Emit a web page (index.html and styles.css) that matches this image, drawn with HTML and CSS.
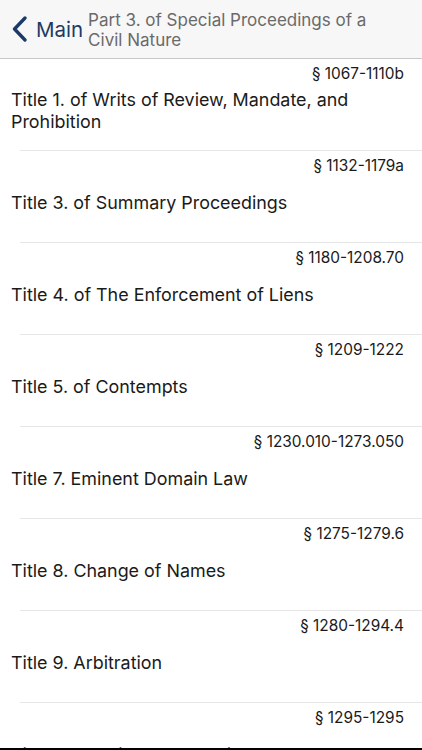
FILE: index.html
```html
<!DOCTYPE html>
<html>
<head>
<meta charset="utf-8">
<link rel="stylesheet" href="styles.css">
</head>
<body>
<header class="nav">
  <div class="back">
    <svg class="chev" width="17" height="26" viewBox="0 0 17 26"><path d="M14 2 L3.5 13 L14 24" fill="none" stroke="#1d3a66" stroke-width="3.3" stroke-linecap="round" stroke-linejoin="round"/></svg>
    <span class="back-text">Main</span>
  </div>
  <div class="nav-title">Part 3. of Special Proceedings of a Civil Nature</div>
</header>
<main class="list">
  <div class="row">
    <div class="label">§ 1067-1110b</div>
    <div class="title"><span>Title 1. of Writs of Review, Mandate, and Prohibition</span></div>
  </div>
  <div class="sep"></div>
  <div class="row">
    <div class="label">§ 1132-1179a</div>
    <div class="title"><span>Title 3. of Summary Proceedings</span></div>
  </div>
  <div class="sep"></div>
  <div class="row">
    <div class="label">§ 1180-1208.70</div>
    <div class="title"><span>Title 4. of The Enforcement of Liens</span></div>
  </div>
  <div class="sep"></div>
  <div class="row">
    <div class="label">§ 1209-1222</div>
    <div class="title"><span>Title 5. of Contempts</span></div>
  </div>
  <div class="sep"></div>
  <div class="row">
    <div class="label">§ 1230.010-1273.050</div>
    <div class="title"><span>Title 7. Eminent Domain Law</span></div>
  </div>
  <div class="sep"></div>
  <div class="row">
    <div class="label">§ 1275-1279.6</div>
    <div class="title"><span>Title 8. Change of Names</span></div>
  </div>
  <div class="sep"></div>
  <div class="row">
    <div class="label">§ 1280-1294.4</div>
    <div class="title"><span>Title 9. Arbitration</span></div>
  </div>
  <div class="sep"></div>
  <div class="row">
    <div class="label">§ 1295-1295</div>
    <div class="title"><span>Title 10. Medical Malpractice</span></div>
  </div>
</main>
<div class="bottom-bar"></div>
</body>
</html>
```
FILE: styles.css
```css
html, body {
  margin: 0;
  padding: 0;
  background: #fff;
  font-family: "Inter", "Liberation Sans", Arial, sans-serif;
  overflow: hidden;
  height: 750px;
}
.nav {
  height: 58px;
  background: #f7f7f7;
  border-bottom: 1px solid #c8c8c8;
  display: flex;
  align-items: center;
  box-sizing: content-box;
}
.back {
  display: flex;
  align-items: center;
  padding-left: 11px;
  color: #1d3a66;
}
.chev { display: block; margin-right: 8px; }
.back-text {
  font-size: 20.5px;
}
.nav-title {
  margin-left: 5px;
  font-size: 17px;
  line-height: 20px;
  color: #6a6a6a;
  padding-right: 20px;
  padding-top: 1px;
}
.list { display: flex; flex-direction: column; }
.row {
  height: 91px;
  display: flex;
  flex-direction: column;
}
.label {
  height: 20px;
  padding-top: 5px;
  line-height: 20px;
  text-align: right;
  padding-right: 18px;
  font-size: 15.4px;
  color: #1a1a1a;
}
.title {
  flex: 1;
  display: flex;
  align-items: center;
  padding: 0 40px 12px 11px;
  font-size: 17.9px;
  line-height: 22px;
  color: #1a1a1a;
}
.sep {
  height: 1px;
  margin-left: 20px;
  background: #e6e6e6;
}
.bottom-bar {
  position: fixed;
  left: 0; right: 0; bottom: 0;
  height: 2px;
  background: #000;
}
```
